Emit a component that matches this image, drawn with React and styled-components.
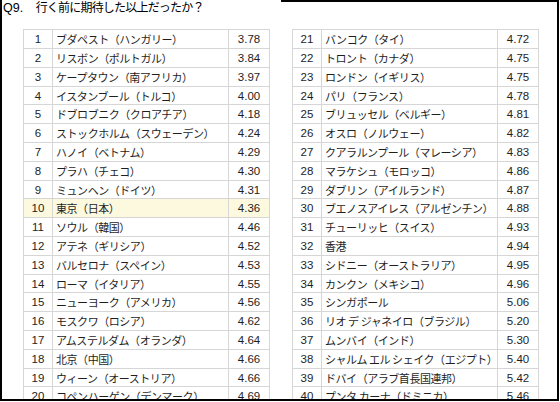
import React from "react";
import styled, { createGlobalStyle } from "styled-components";

const left = [
  [1, "ブダペスト（ハンガリー）", "3.78"],
  [2, "リスボン（ポルトガル）", "3.84"],
  [3, "ケープタウン（南アフリカ）", "3.97"],
  [4, "イスタンブール（トルコ）", "4.00"],
  [5, "ドブロブニク（クロアチア）", "4.18"],
  [6, "ストックホルム（スウェーデン）", "4.24"],
  [7, "ハノイ（ベトナム）", "4.29"],
  [8, "プラハ（チェコ）", "4.30"],
  [9, "ミュンヘン（ドイツ）", "4.31"],
  [10, "東京（日本）", "4.36"],
  [11, "ソウル（韓国）", "4.46"],
  [12, "アテネ（ギリシア）", "4.52"],
  [13, "バルセロナ（スペイン）", "4.53"],
  [14, "ローマ（イタリア）", "4.55"],
  [15, "ニューヨーク（アメリカ）", "4.56"],
  [16, "モスクワ（ロシア）", "4.62"],
  [17, "アムステルダム（オランダ）", "4.64"],
  [18, "北京（中国）", "4.66"],
  [19, "ウィーン（オーストリア）", "4.66"],
  [20, "コペンハーゲン（デンマーク）", "4.69"],
];

const right = [
  [21, "バンコク（タイ）", "4.72"],
  [22, "トロント（カナダ）", "4.75"],
  [23, "ロンドン（イギリス）", "4.75"],
  [24, "パリ（フランス）", "4.78"],
  [25, "ブリュッセル（ベルギー）", "4.81"],
  [26, "オスロ（ノルウェー）", "4.82"],
  [27, "クアラルンプール（マレーシア）", "4.83"],
  [28, "マラケシュ（モロッコ）", "4.86"],
  [29, "ダブリン（アイルランド）", "4.87"],
  [30, "ブエノスアイレス（アルゼンチン）", "4.88"],
  [31, "チューリッヒ（スイス）", "4.93"],
  [32, "香港", "4.94"],
  [33, "シドニー（オーストラリア）", "4.95"],
  [34, "カンクン（メキシコ）", "4.96"],
  [35, "シンガポール", "5.06"],
  [36, "リオ デ ジャネイロ（ブラジル）", "5.20"],
  [37, "ムンバイ（インド）", "5.30"],
  [38, "シャルム エル シェイク（エジプト）", "5.40"],
  [39, "ドバイ（アラブ首長国連邦）", "5.42"],
  [40, "プンタ カーナ（ドミニカ）", "5.46"],
];

const GlobalStyle = createGlobalStyle`
  html, body {
    margin: 0;
    padding: 0;
    background: #fff;
    overflow: hidden;
  }
`;

const Frame = styled.div`
  box-sizing: border-box;
  width: 559px;
  height: 401px;
  border-left: 2px solid #000;
  border-right: 2px solid #000;
  border-bottom: 2px solid #000;
  overflow: hidden;
  display: flex;
  flex-direction: column;
`;

const Header = styled.div`
  display: flex;
  height: 29px;
  flex: none;
`;

const Title = styled.div`
  width: 278px;
  padding: 1px 0 0 1px;
  font-family: "Liberation Sans", "Noto Sans CJK JP", sans-serif;
  font-size: 12.5px;
  line-height: 15px;
  color: #000;
  white-space: nowrap;
`;

const TitleText = styled.span`
  font-size: 12px;
  letter-spacing: -0.8px;
`;

const Rule = styled.div`
  flex: 1;
  border-top: 2px solid #000;
`;

const Tables = styled.div`
  display: flex;
  gap: 22px;
  padding: 0.3px 0 0 21px;
`;

const Table = styled.div`
  width: 247px;
  border-top: 1px solid #d6d6d6;
  border-right: 1px solid #d6d6d6;
  box-sizing: border-box;
`;

const Row = styled.div`
  display: grid;
  grid-template-columns: 29px 176px 41px;
  height: 18.8px;
  box-sizing: border-box;
  border-bottom: 1px solid #d6d6d6;
  background: ${(p) => (p.$hl ? "#fcf9de" : "#fff")};
  color: #1e1e1e;
`;

const Cell = styled.div`
  border-left: 1px solid #d6d6d6;
  display: flex;
  align-items: center;
  white-space: nowrap;
  overflow: hidden;
`;

const Num = styled(Cell)`
  justify-content: center;
  font-family: "Liberation Sans", sans-serif;
  font-size: 11.5px;
`;

const Name = styled(Cell)`
  padding-left: 3px;
  font-family: "Noto Sans CJK JP", sans-serif;
  font-size: 11px;
  letter-spacing: -0.45px;
`;

const RankTable = ({ rows }) => (
  <Table>
    {rows.map(([n, name, v]) => (
      <Row key={n} $hl={n === 10}>
        <Num>{n}</Num>
        <Name>{name}</Name>
        <Num>{v}</Num>
      </Row>
    ))}
  </Table>
);

export default function App() {
  return (
    <>
      <GlobalStyle />
      <Frame>
        <Header>
          <Title>
            Q9.　<TitleText>行く前に期待した以上だったか？</TitleText>
          </Title>
          <Rule />
        </Header>
        <Tables>
          <RankTable rows={left} />
          <RankTable rows={right} />
        </Tables>
      </Frame>
    </>
  );
}
